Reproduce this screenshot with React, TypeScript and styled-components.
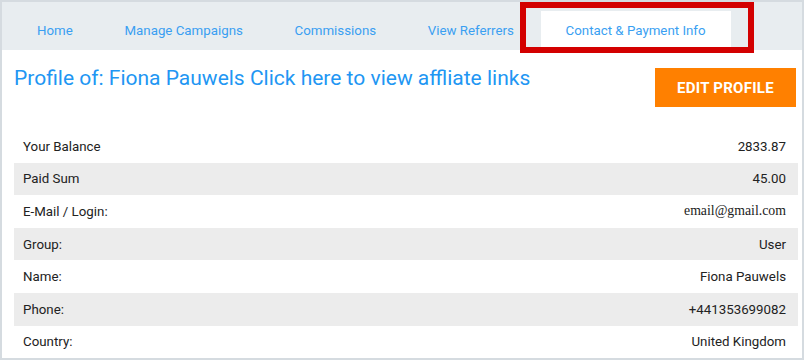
import * as React from 'react';
import styled, { createGlobalStyle } from 'styled-components';

const GlobalStyle = createGlobalStyle`
  html, body {
    margin: 0;
    padding: 0;
    background: #ffffff;
  }
  * {
    box-sizing: border-box;
  }
`;

const tabs = ['Home', 'Manage Campaigns', 'Commissions', 'View Referrers', 'Contact & Payment Info'];

const rows = [
  { label: 'Your Balance', value: '2833.87' },
  { label: 'Paid Sum', value: '45.00' },
  { label: 'E-Mail / Login:', value: 'email@gmail.com', serif: true },
  { label: 'Group:', value: 'User' },
  { label: 'Name:', value: 'Fiona Pauwels' },
  { label: 'Phone:', value: '+441353699082' },
  { label: 'Country:', value: 'United Kingdom' },
];

export default function App() {
  const [active, setActive] = React.useState(4);

  return (
    <>
      <GlobalStyle />
      <Frame>
        <TabBar>
          {tabs.map((t, i) => (
            <Tab key={t} $active={i === active} onClick={() => setActive(i)}>
              {t}
              {i === 4 && <Highlight />}
            </Tab>
          ))}
        </TabBar>

        <Content>
          <HeaderRow>
            <Title>Profile of: Fiona Pauwels Click here to view affliate links</Title>
            <EditBtn>EDIT PROFILE</EditBtn>
          </HeaderRow>

          <InfoTable>
            {rows.map((r, i) => (
              <InfoRow key={r.label} $striped={i % 2 === 1}>
                <Label>{r.label}</Label>
                <Value $serif={r.serif}>{r.value}</Value>
              </InfoRow>
            ))}
          </InfoTable>
        </Content>
      </Frame>
    </>
  );
}

const Frame = styled.div`
  width: 804px;
  height: 360px;
  border: 2px solid #d5dbe0;
  background: #ffffff;
  font-family: Roboto, 'Liberation Sans', sans-serif;
  overflow: hidden;
`;

const TabBar = styled.div`
  display: flex;
  flex-direction: row;
  align-items: flex-end;
  gap: 1.7px;
  height: 48px;
  padding-left: 10px;
  background-color: #e8edf0;
`;

const Tab = styled.div<{ $active?: boolean }>`
  position: relative;
  height: 39px;
  padding: 0 25px;
  display: flex;
  align-items: center;
  font-size: 13.3px;
  color: #3a9ff2;
  cursor: pointer;
  background-color: ${(p) => (p.$active ? '#ffffff' : 'transparent')};
`;

/* red annotation box drawn over the active tab */
const Highlight = styled.div`
  position: absolute;
  left: -21px;
  right: -23px;
  top: -9px;
  bottom: -3px;
  border: 6px solid #d30000;
  pointer-events: none;
`;

const Content = styled.div`
  padding: 0 4px 0 12px;
`;

const HeaderRow = styled.div`
  display: flex;
  flex-direction: row;
  justify-content: space-between;
  align-items: flex-start;
  padding-top: 16px;
  height: 80px;
`;

const Title = styled.div`
  font-size: 21px;
  color: #2196f3;
  line-height: 25px;
`;

const EditBtn = styled.button`
  margin-top: 2px;
  margin-right: 2px;
  width: 141px;
  height: 39px;
  border: none;
  background-color: #ff8000;
  color: #ffffff;
  font-family: Roboto, 'Liberation Sans', sans-serif;
  font-size: 15px;
  letter-spacing: 0.25px;
  font-weight: 700;
  cursor: pointer;
`;

const InfoTable = styled.div`
  display: flex;
  flex-direction: column;
`;

const InfoRow = styled.div<{ $striped?: boolean }>`
  display: flex;
  flex-direction: row;
  justify-content: space-between;
  align-items: center;
  height: 32.6px;
  padding: 0 12px 0 9px;
  background-color: ${(p) => (p.$striped ? '#ececec' : '#ffffff')};
  font-size: 13.3px;
  color: #222222;
`;

const Label = styled.span``;

const Value = styled.span<{ $serif?: boolean }>`
  font-family: ${(p) => (p.$serif ? "'Liberation Serif', serif" : "Roboto, 'Liberation Sans', sans-serif")};
  font-size: ${(p) => (p.$serif ? '13.8px' : '13.3px')};
`;
